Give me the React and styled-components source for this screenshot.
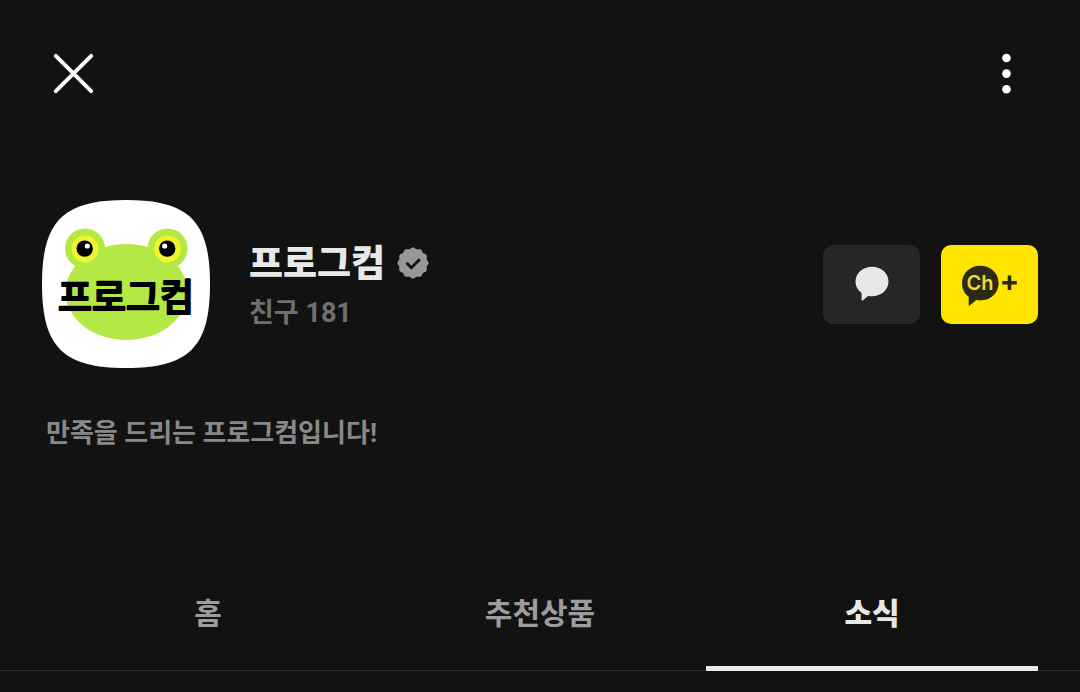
import React, { useState } from 'react'
import styled, { createGlobalStyle } from 'styled-components'

const TABS = ['홈', '추천상품', '소식']

// twelve-lobed outline of the verified badge
const badgePath = () => {
    const points = []
    for (let i = 0; i < 120; i++) {
        const angle = (i / 120) * Math.PI * 2 - Math.PI / 2
        const r = 14.9 + 0.7 * Math.cos(angle * 12)
        points.push(`${(16 + r * Math.cos(angle)).toFixed(2)} ${(16 + r * Math.sin(angle)).toFixed(2)}`)
    }
    return `M${points.join('L')}Z`
}

const FrogLogo = () => (
    <Avatar viewBox="0 0 168 168" role="img" aria-label="프로그컴">
        <path fill="#fff" d="M84 0C147 0 168 21 168 84S147 168 84 168S0 147 0 84S21 0 84 0Z" />
        <g fill="#b3e845">
            <ellipse cx="84.5" cy="92" rx="61" ry="48" />
            <circle cx="43" cy="48.5" r="20" />
            <circle cx="125.5" cy="48.5" r="20" />
        </g>
        <g fill="#eff52e">
            <circle cx="43" cy="49" r="13.5" />
            <circle cx="125.5" cy="49" r="13.5" />
        </g>
        <g fill="#000">
            <circle cx="42.7" cy="48.6" r="8.2" />
            <circle cx="125.2" cy="48.6" r="8.2" />
        </g>
        <g fill="#fff">
            <circle cx="45.3" cy="46" r="2.6" />
            <circle cx="122.7" cy="46" r="2.6" />
        </g>
        <AvatarText x="84" y="111" textAnchor="middle">프로그컴</AvatarText>
    </Avatar>
)

const VerifiedIcon = () => (
    <svg width="32" height="32" viewBox="0 0 32 32" role="img" aria-label="인증 채널">
        <path fill="#979797" d={badgePath()} />
        <path fill="none" stroke="#121212" strokeWidth="3" d="M9.5 15.8L14.4 20.7L22.8 12.3" />
    </svg>
)

const App = () => {
    const [active, setActive] = useState('소식')

    return (
        <Page>
            <GlobalStyle />
            <Header>
                <IconButton type="button" aria-label="닫기">
                    <svg width="64" height="64" viewBox="0 0 64 64">
                        <path fill="none" stroke="#fff" strokeWidth="4" strokeLinecap="round" d="M13.8 13.8L49.2 49.2M49.2 13.8L13.8 49.2" />
                    </svg>
                </IconButton>
                <IconButton type="button" aria-label="더보기">
                    <svg width="64" height="64" viewBox="0 0 64 64" fill="#fff">
                        <circle cx="32.5" cy="16" r="4.3" />
                        <circle cx="32.5" cy="31.6" r="4.3" />
                        <circle cx="32.5" cy="47.3" r="4.3" />
                    </svg>
                </IconButton>
            </Header>

            <Profile>
                <FrogLogo />
                <Info>
                    <NameRow>
                        <Name>프로그컴</Name>
                        <VerifiedIcon />
                    </NameRow>
                    <Friends>친구 181</Friends>
                </Info>
                <Actions>
                    <ActionButton type="button" aria-label="채팅">
                        <svg width="34" height="36" viewBox="0 0 34 36">
                            <path fill="#e7e7e7" d="M17 .8C26.4 .8 33.5 7.2 33.5 15.6S26.4 30.3 17 30.3C15.7 30.3 14.4 30.2 13.2 29.9L7.4 34.7C7 35 6.6 34.8 6.6 34.3V26.9C2.9 24.4 .5 20.3 .5 15.6C.5 7.2 7.7 .8 17 .8Z" />
                        </svg>
                    </ActionButton>
                    <ActionButton type="button" $primary aria-label="채널 추가">
                        <svg width="57" height="46" viewBox="0 -4 57 46">
                            <path fill="#2d2a14" d="M19.4 .8C29.7 .8 37.6 8.3 37.6 18.2S29.7 35.4 19.4 35.4C18 35.4 16.7 35.2 15.4 34.9L8.6 40.5C8.2 40.8 7.7 40.6 7.7 40.1V31.7C3.5 28.7 1 23.8 1 18.2C1 8.3 9 .8 19.4 .8Z" />
                            <ChText x="19" y="25" textAnchor="middle">Ch</ChText>
                            <path fill="none" stroke="#2d2a14" strokeWidth="3.6" d="M41.3 17.8H55.8M48.5 10.5V25.1" />
                        </svg>
                    </ActionButton>
                </Actions>
            </Profile>

            <Description>만족을 드리는 프로그컴입니다!</Description>

            <Tabs role="tablist">
                {TABS.map((tab) => (
                    <Tab
                        key={tab}
                        type="button"
                        role="tab"
                        aria-selected={active === tab}
                        $active={active === tab}
                        onClick={() => setActive(tab)}
                    >
                        {tab}
                    </Tab>
                ))}
            </Tabs>
        </Page>
    )
}

const GlobalStyle = createGlobalStyle`
    * {
        box-sizing: border-box;
    }

    body {
        margin: 0;
        background-color: #121212;
        font-family: Roboto, "Noto Sans CJK KR", sans-serif;
    }

    button {
        margin: 0;
        padding: 0;
        border: none;
        background: none;
        font-family: inherit;
        cursor: pointer;
    }

    svg {
        display: block;
        flex-shrink: 0;
    }
`

const Page = styled.main`
    min-height: 100vh;
    background-color: #121212;
    color: #e8e8e8;
`

const Header = styled.header`
    display: flex;
    justify-content: space-between;
    padding: 42px 42px 94px;
`

const IconButton = styled.button`
    width: 64px;
    height: 64px;
`

const Profile = styled.section`
    display: flex;
    align-items: center;
    padding: 0 42px;
`

const Avatar = styled.svg`
    width: 168px;
    height: 168px;
`

const AvatarText = styled.text`
    font-size: 37px;
    font-weight: 500;
    fill: #000;
    stroke: #000;
    stroke-width: 2px;
    stroke-linecap: round;
    stroke-linejoin: round;
`

const Info = styled.div`
    flex: 1;
    margin-left: 39px;
    padding-top: 6px;
`

const NameRow = styled.div`
    display: flex;
    align-items: center;
    gap: 12px;
`

const Name = styled.h1`
    margin: 0;
    padding-top: 4px;
    font-size: 37px;
    font-weight: 900;
    line-height: 44px;
`

const Friends = styled.p`
    margin: 4px 0 0;
    color: #6f6f6f;
    font-size: 27px;
    font-weight: 700;
    line-height: 44px;
`

const Actions = styled.div`
    display: flex;
    gap: 21px;
`

const ActionButton = styled.button`
    display: flex;
    align-items: center;
    justify-content: center;
    width: 97px;
    height: 79px;
    border-radius: 10px;
    background-color: ${(props) => (props.$primary ? '#ffe500' : '#262626')};
`

const ChText = styled.text`
    font-family: Inter, sans-serif;
    font-size: 20px;
    font-weight: 600;
    fill: #f0dc2c;
`

const Description = styled.p`
    margin: 0;
    padding: 45px 46px 0;
    color: #888;
    font-size: 26px;
    font-weight: 700;
    line-height: 40px;
`

const Tabs = styled.div`
    display: flex;
    margin-top: 102px;
    padding: 0 42px;
    border-bottom: 1px solid #2b2b2b;
`

const Tab = styled.button`
    flex: 1;
    height: 116px;
    margin-bottom: -1px;
    padding-top: 2px;
    border-top: 5px solid transparent;
    border-bottom: 5px solid ${(props) => (props.$active ? '#e8e8e8' : 'transparent')};
    color: ${(props) => (props.$active ? '#e8e8e8' : '#9c9c9c')};
    font-size: 30px;
    font-weight: ${(props) => (props.$active ? 900 : 700)};
    line-height: 40px;
`

export default App
